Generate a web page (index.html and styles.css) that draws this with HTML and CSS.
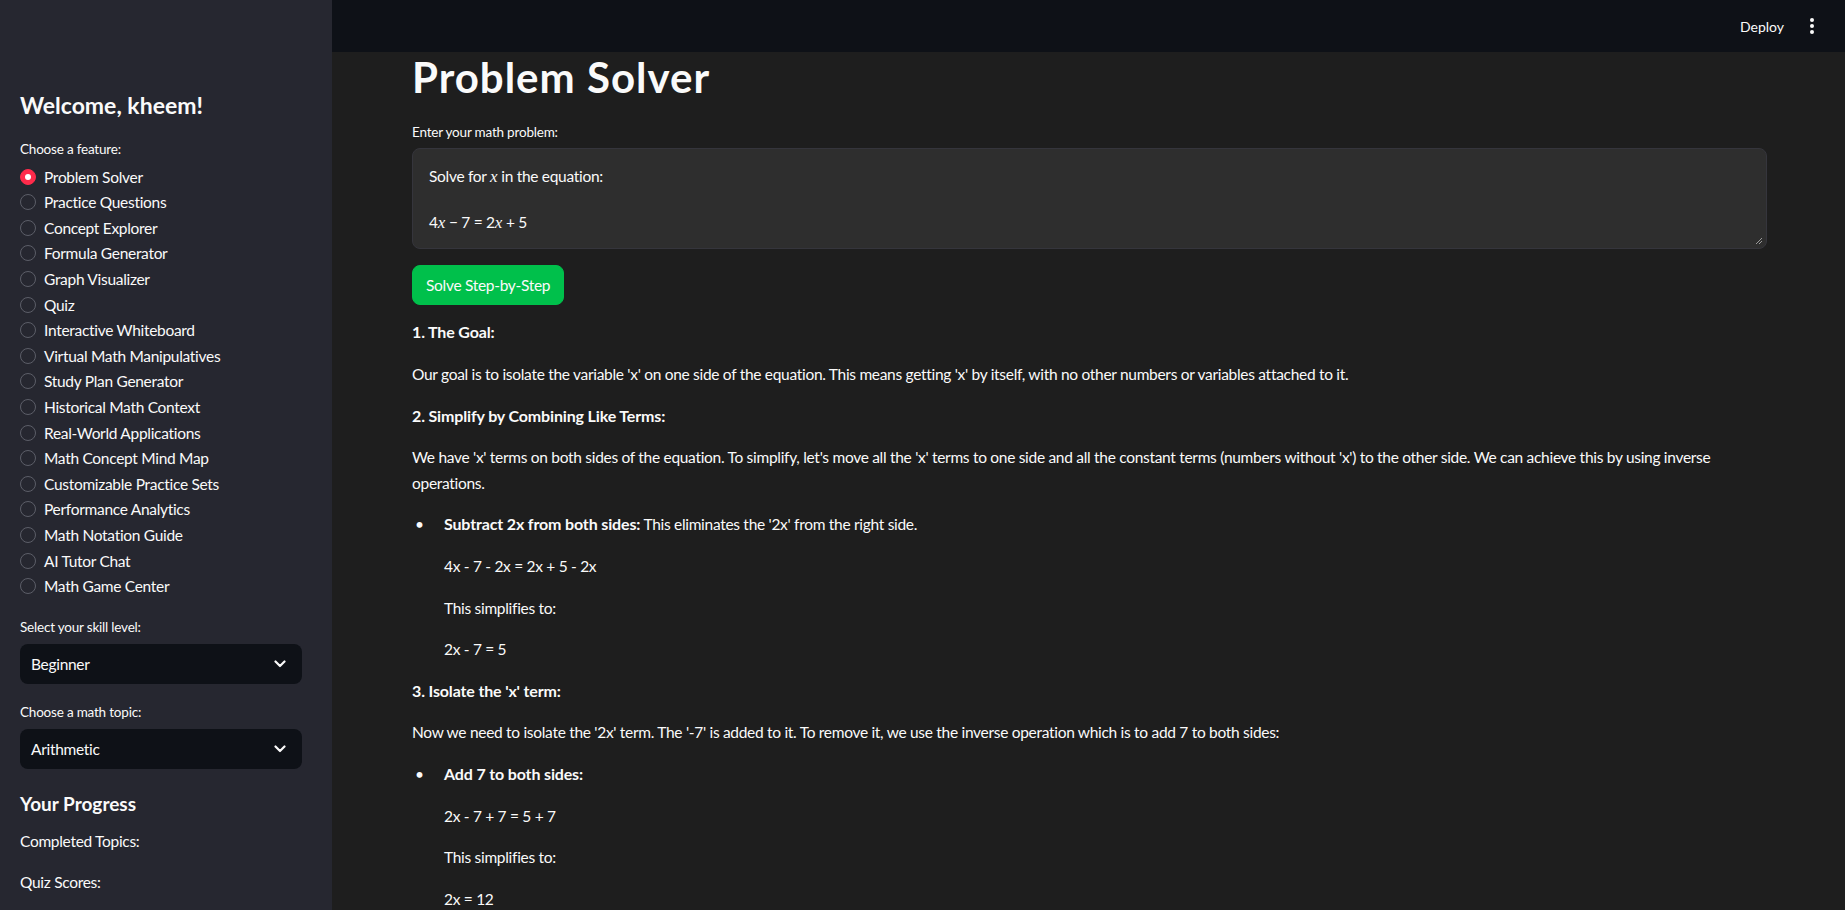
FILE: index.html
```html
<!DOCTYPE html>
<html lang="en">
<head>
<meta charset="utf-8">
<title>Problem Solver</title>
<link rel="stylesheet" href="styles.css">
</head>
<body>
<div class="app">
  <aside class="sidebar">
    <h2 class="sb-title">Welcome, kheem!</h2>
    <div class="field-label">Choose a feature:</div>
    <ul class="radio-group">
      <li class="radio checked"><span class="dot"></span>Problem Solver</li>
      <li class="radio"><span class="dot"></span>Practice Questions</li>
      <li class="radio"><span class="dot"></span>Concept Explorer</li>
      <li class="radio"><span class="dot"></span>Formula Generator</li>
      <li class="radio"><span class="dot"></span>Graph Visualizer</li>
      <li class="radio"><span class="dot"></span>Quiz</li>
      <li class="radio"><span class="dot"></span>Interactive Whiteboard</li>
      <li class="radio"><span class="dot"></span>Virtual Math Manipulatives</li>
      <li class="radio"><span class="dot"></span>Study Plan Generator</li>
      <li class="radio"><span class="dot"></span>Historical Math Context</li>
      <li class="radio"><span class="dot"></span>Real-World Applications</li>
      <li class="radio"><span class="dot"></span>Math Concept Mind Map</li>
      <li class="radio"><span class="dot"></span>Customizable Practice Sets</li>
      <li class="radio"><span class="dot"></span>Performance Analytics</li>
      <li class="radio"><span class="dot"></span>Math Notation Guide</li>
      <li class="radio"><span class="dot"></span>AI Tutor Chat</li>
      <li class="radio"><span class="dot"></span>Math Game Center</li>
    </ul>
    <div class="field-label gap-top">Select your skill level:</div>
    <div class="select">
      <span>Beginner</span>
      <svg class="chev" width="12" height="8" viewBox="0 0 12 8"><path d="M1.5 1.5 L6 6 L10.5 1.5" fill="none" stroke="#fafafa" stroke-width="2.2" stroke-linecap="round" stroke-linejoin="round"/></svg>
    </div>
    <div class="field-label gap-top">Choose a math topic:</div>
    <div class="select">
      <span>Arithmetic</span>
      <svg class="chev" width="12" height="8" viewBox="0 0 12 8"><path d="M1.5 1.5 L6 6 L10.5 1.5" fill="none" stroke="#fafafa" stroke-width="2.2" stroke-linecap="round" stroke-linejoin="round"/></svg>
    </div>
    <h3 class="sb-sub">Your Progress</h3>
    <p class="sb-p">Completed Topics:</p>
    <p class="sb-p">Quiz Scores:</p>
  </aside>
  <div class="main">
    <header class="topbar">
      <span class="deploy">Deploy</span>
      <svg class="kebab" width="6" height="18" viewBox="0 0 6 18"><circle cx="3" cy="3" r="2" fill="#fafafa"/><circle cx="3" cy="9" r="2" fill="#fafafa"/><circle cx="3" cy="15" r="2" fill="#fafafa"/></svg>
    </header>
    <div class="scroll">
      <div class="content">
        <h1 class="title">Problem Solver</h1>
        <div class="field-label">Enter your math problem:</div>
        <div class="textarea">
          <div>Solve for <span class="mi">x</span> in the equation:</div>
          <div>&nbsp;</div>
          <div>4<span class="mi">x</span> − 7 = 2<span class="mi">x</span> + 5</div>
          <svg class="grip" width="8" height="8" viewBox="0 0 8 8"><path d="M1 7 L7 1 M4 7 L7 4" stroke="#9a9a9a" stroke-width="1"/></svg>
        </div>
        <button class="btn">Solve Step-by-Step</button>
        <div class="md">
          <p><b>1. The Goal:</b></p>
          <p>Our goal is to isolate the variable 'x' on one side of the equation. This means getting 'x' by itself, with no other numbers or variables attached to it.</p>
          <p><b>2. Simplify by Combining Like Terms:</b></p>
          <p>We have 'x' terms on both sides of the equation. To simplify, let's move all the 'x' terms to one side and all the constant terms (numbers without 'x') to the other side. We can achieve this by using inverse operations.</p>
          <ul class="bullets">
            <li><div class="li-body">
              <p><b>Subtract 2x from both sides:</b> This eliminates the '2x' from the right side.</p>
              <p>4x - 7 - 2x = 2x + 5 - 2x</p>
              <p>This simplifies to:</p>
              <p>2x - 7 = 5</p>
            </div></li>
          </ul>
          <p><b>3. Isolate the 'x' term:</b></p>
          <p>Now we need to isolate the '2x' term. The '-7' is added to it. To remove it, we use the inverse operation which is to add 7 to both sides:</p>
          <ul class="bullets">
            <li><div class="li-body">
              <p><b>Add 7 to both sides:</b></p>
              <p>2x - 7 + 7 = 5 + 7</p>
              <p>This simplifies to:</p>
              <p>2x = 12</p>
            </div></li>
          </ul>
          <p><b>4. Solve for x:</b></p>
          <p>Now, to isolate 'x', we need to get rid of the '2' that is multiplying it. We do this by dividing both sides by 2:</p>
          <ul class="bullets">
            <li><div class="li-body">
              <p><b>Divide both sides by 2:</b></p>
              <p>2x / 2 = 12 / 2</p>
              <p>This simplifies to:</p>
              <p>x = 6</p>
            </div></li>
          </ul>
          <p><b>5. Check your answer:</b></p>
          <p>Substitute x = 6 back into the original equation:</p>
          <p>4(6) - 7 = 2(6) + 5</p>
          <p>24 - 7 = 12 + 5</p>
          <p>17 = 17</p>
          <p>Since both sides are equal, our solution is correct. Therefore, x = 6.</p>
        </div>
      </div>
    </div>
  </div>
</div>
</body>
</html>
```

FILE: styles.css
```css
* { box-sizing: border-box; }
html, body { margin: 0; padding: 0; height: 100%; }
body {
  font-family: Lato, "Noto Sans", sans-serif;
  color: #fafafa;
  background: #1e1e1e;
  font-size: 15.5px;
  letter-spacing: -0.3px;
  overflow: hidden;
}
b { font-size: 16px; letter-spacing: -0.15px; line-height: 1; }
.app { display: flex; height: 100vh; }

/* Sidebar */
.sidebar {
  width: 332px;
  flex: none;
  background: #262730;
  padding: 91px 30px 0 20px;
  overflow: hidden;
}
.sb-title {
  margin: 0;
  font-size: 23px;
  line-height: 28.8px;
  font-weight: 700;
  letter-spacing: 0;
}
.field-label {
  font-size: 13.5px;
  letter-spacing: -0.2px;
  line-height: 20px;
  margin-top: 19px;
}
.gap-top { margin-top: 18px; }
.radio-group {
  list-style: none;
  margin: 5px 0 0;
  padding: 0;
}
.radio {
  display: flex;
  align-items: center;
  height: 25.6px;
  gap: 8px;
}
.dot {
  width: 16px;
  height: 16px;
  border-radius: 50%;
  border: 1px solid #5c5e68;
  flex: none;
  display: flex;
  align-items: center;
  justify-content: center;
}
.radio.checked .dot {
  background: #ff2b4b;
  border-color: #ff2b4b;
}
.radio.checked .dot::after {
  content: "";
  width: 6px;
  height: 6px;
  border-radius: 50%;
  background: #fff;
}
.select {
  margin-top: 7px;
  height: 40px;
  background: #0e1117;
  border-radius: 8px;
  display: flex;
  align-items: center;
  justify-content: space-between;
  padding: 0 16px 0 11px;
}
.sb-sub {
  margin: 23px 0 0;
  font-size: 19px;
  line-height: 24px;
  font-weight: 700;
  letter-spacing: 0;
}
.sb-p {
  margin: 13px 0 0;
  line-height: 25.6px;
}
.sb-p + .sb-p { margin-top: 16px; }

/* Main */
.main {
  flex: 1;
  display: flex;
  flex-direction: column;
  min-width: 0;
}
.topbar {
  height: 52px;
  flex: none;
  background: #0e1117;
  display: flex;
  align-items: center;
  justify-content: flex-end;
  padding-right: 30px;
  gap: 25px;
}
.deploy { font-size: 14px; letter-spacing: 0; }
.kebab { display: block; }
.scroll {
  flex: 1;
  overflow-y: scroll;
}
.scroll::-webkit-scrollbar { width: 2px; }
.scroll::-webkit-scrollbar-track { background: transparent; }
.scroll::-webkit-scrollbar-thumb { background: #8b8b8b; }
.content {
  padding: 0 78px 160px 80px;
}
.title {
  margin: 0;
  font-size: 42px;
  line-height: 50.4px;
  font-weight: 700;
  letter-spacing: 1px;
}
.content > .field-label { margin-top: 20px; }
.textarea {
  position: relative;
  margin-top: 6px;
  background: #2e2e2e;
  border: 1px solid #35353c;
  border-radius: 8px;
  padding: 16px;
  line-height: 22.4px;
  height: 101px;
}
.mi { font-family: "Liberation Serif", "DejaVu Serif", serif; font-style: italic; font-size: 17px; letter-spacing: 0; }
.grip { position: absolute; right: 3px; bottom: 3px; }
.btn {
  margin-top: 16px;
  height: 40px;
  padding: 0 13px;
  background: #00c04b;
  border: 1px solid #00c04b;
  border-radius: 8px;
  color: #fafafa;
  font-family: inherit;
  font-size: 15.5px;
  letter-spacing: -0.3px;
}
.md { margin-top: 15px; }
.md p {
  margin: 0 0 16px;
  line-height: 25.6px;
}
.bullets {
  list-style: none;
  margin: 0;
  padding: 0;
}
.bullets li {
  display: flex;
}
.bullets li::before {
  content: "•";
  width: 29px;
  flex: none;
  padding-left: 3px;
  line-height: 25.6px;
}
.li-body { flex: 1; min-width: 0; }
```
